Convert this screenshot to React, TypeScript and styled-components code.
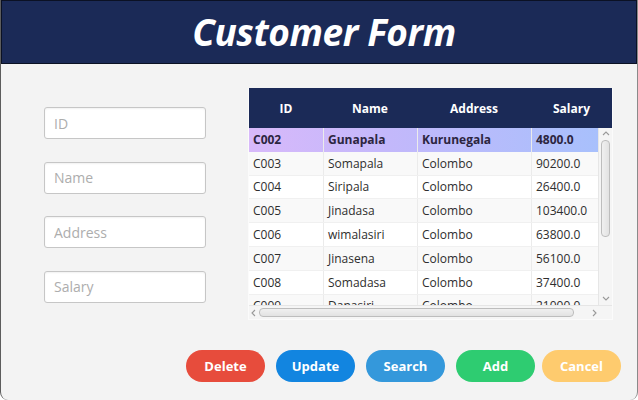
import React from "react";
import styled, { createGlobalStyle } from "styled-components";

const GlobalStyle = createGlobalStyle`
  body {
    margin: 0;
    background: #ffffff;
    font-family: "Open Sans", "Noto Sans", sans-serif;
  }
`;

// ウィンドウ全体
const Window = styled.div`
  width: 638px;
  height: 400px;
  box-sizing: border-box;
  border-left: 1px solid #5c5c5c;
  border-right: 1px solid #8a8a8a;
  border-bottom-left-radius: 8px;
  border-bottom-right-radius: 8px;
  background: #f3f3f3;
  display: flex;
  flex-direction: column;
  overflow: hidden;
`;

const Header = styled.header`
  height: 64px;
  box-sizing: border-box;
  border: 1px solid #0b1124;
  background: #1b2a57;
  display: flex;
  align-items: center;
  justify-content: center;
`;

const Title = styled.h1`
  margin: 0 0 2px 10px;
  color: #ffffff;
  font-family: "Open Sans", sans-serif;
  font-style: italic;
  font-weight: 700;
  font-size: 37px;
  letter-spacing: -0.4px;
`;

const Body = styled.main`
  flex: 1;
  display: flex;
  flex-direction: column;
  padding: 24px 0 0 43px;
`;

const Row = styled.div`
  display: flex;
  gap: 42px;
`;

const Fields = styled.div`
  width: 162px;
  margin-top: 19px;
  display: flex;
  flex-direction: column;
  gap: 22.5px;
`;

const Field = styled.input`
  height: 32px;
  box-sizing: border-box;
  border: 1px solid #c6c6c6;
  border-radius: 3px;
  background: #ffffff;
  box-shadow: inset 0 1px 2px rgba(0, 0, 0, 0.06);
  padding: 0 9px;
  font-family: "Open Sans", sans-serif;
  font-size: 14px;
  outline: none;
  &::placeholder {
    color: #adadad;
  }
`;

// テーブル
const Table = styled.div`
  width: 365px;
  height: 232px;
  box-sizing: border-box;
  border: 1px solid #fbfbfb;
  border-top: none;
  display: flex;
  flex-direction: column;
  background: #ffffff;
`;

const HeadRow = styled.div`
  height: 40px;
  flex-shrink: 0;
  background: #1b2a57;
  display: grid;
  grid-template-columns: 74px 94px 114px 1fr;
`;

const HeadCell = styled.div`
  display: flex;
  align-items: center;
  justify-content: center;
  color: #ffffff;
  font-weight: 700;
  font-size: 12px;
`;

const Middle = styled.div`
  flex: 1;
  display: flex;
  min-height: 0;
`;

const Rows = styled.div`
  flex: 1;
  overflow: hidden;
`;

const DataRow = styled.div<{ $odd: boolean; $selected?: boolean }>`
  height: 23.8px;
  display: grid;
  grid-template-columns: 74px 94px 114px 1fr;
  background: ${(p) =>
    p.$selected
      ? "linear-gradient(90deg, #d8b9fa 0%, #c3b8fb 40%, #a8c0fc 100%)"
      : p.$odd
      ? "#f9f9f9"
      : "#ffffff"};
  border-bottom: ${(p) => (p.$selected ? "none" : "1px solid #f0f0f0")};
  box-sizing: border-box;
  font-weight: ${(p) => (p.$selected ? 700 : 400)};
  color: ${(p) => (p.$selected ? "#2c2540" : "#2e2e2e")};
`;

const Cell = styled.div<{ $selected?: boolean }>`
  display: flex;
  align-items: center;
  padding-left: 4px;
  font-size: 12px;
  white-space: nowrap;
  overflow: hidden;
  & + & {
    border-left: 1px solid ${(p) => (p.$selected ? "#2a9fd0" : "#ebebeb")};
  }
`;

const VScroll = styled.div`
  width: 13px;
  flex-shrink: 0;
  background: #f5f5f5;
  border-left: 1px solid #e6e6e6;
  display: flex;
  flex-direction: column;
  align-items: center;
`;

const Arrow = styled.div<{ $w?: number }>`
  height: 12px;
  width: ${(p) => (p.$w ? `${p.$w}px` : "auto")};
  display: flex;
  align-items: center;
  justify-content: center;
`;

const VThumb = styled.div`
  width: 9px;
  height: 97px;
  box-sizing: border-box;
  border: 1px solid #bdbdbd;
  border-radius: 4px;
  background: linear-gradient(90deg, #f0f0f0, #e2e2e2);
`;

const Spacer = styled.div`
  flex: 1;
`;

const HScroll = styled.div`
  height: 13px;
  flex-shrink: 0;
  display: flex;
  align-items: center;
  background: #f5f5f5;
  border-top: 1px solid #e6e6e6;
`;

const HTrack = styled.div`
  width: 352px;
  display: flex;
  align-items: center;
`;

const HThumb = styled.div`
  width: 315px;
  height: 9px;
  box-sizing: border-box;
  border: 1px solid #bdbdbd;
  border-radius: 4px;
  background: linear-gradient(180deg, #f0f0f0, #e2e2e2);
`;

const Corner = styled.div`
  flex: 1;
  align-self: stretch;
  background: #f5f5f5;
`;

// ボタン
const Buttons = styled.div`
  display: flex;
  gap: 11px;
  margin: 30px 0 0 142px;
`;

const Button = styled.button<{ $color: string; $tight?: boolean }>`
  width: 79px;
  height: 32px;
  border: none;
  border-radius: 16px;
  margin-left: ${(p) => (p.$tight ? "-4px" : "0")};
  background: ${(p) => p.$color};
  color: #ffffff;
  font-family: "Open Sans", sans-serif;
  font-weight: 700;
  font-size: 13px;
  cursor: pointer;
`;

const Chevron: React.FC<{ dir: "up" | "down" | "left" | "right" }> = ({ dir }) => {
  const d = {
    up: "M1 5 L4 2 L7 5",
    down: "M1 2 L4 5 L7 2",
    left: "M5 1 L2 4 L5 7",
    right: "M2 1 L5 4 L2 7",
  }[dir];
  return (
    <svg width="8" height="8" viewBox="0 0 8 8">
      <path d={d} fill="none" stroke="#9a9a9a" strokeWidth="1.1" />
    </svg>
  );
};

const customers = [
  ["C002", "Gunapala", "Kurunegala", "4800.0"],
  ["C003", "Somapala", "Colombo", "90200.0"],
  ["C004", "Siripala", "Colombo", "26400.0"],
  ["C005", "Jinadasa", "Colombo", "103400.0"],
  ["C006", "wimalasiri", "Colombo", "63800.0"],
  ["C007", "Jinasena", "Colombo", "56100.0"],
  ["C008", "Somadasa", "Colombo", "37400.0"],
  ["C009", "Danasiri", "Colombo", "21000.0"],
];

const App: React.FC = () => {
  return (
    <Window>
      <GlobalStyle />
      <Header>
        <Title>Customer Form</Title>
      </Header>
      <Body>
        <Row>
          <Fields>
            <Field placeholder="ID" />
            <Field placeholder="Name" />
            <Field placeholder="Address" />
            <Field placeholder="Salary" />
          </Fields>

          <Table>
            <HeadRow>
              <HeadCell>ID</HeadCell>
              <HeadCell>Name</HeadCell>
              <HeadCell>Address</HeadCell>
              <HeadCell>Salary</HeadCell>
            </HeadRow>
            <Middle>
              <Rows>
                {customers.map((c, i) => (
                  <DataRow key={c[0]} $odd={i % 2 === 1} $selected={i === 0}>
                    {c.map((v) => (
                      <Cell key={v} $selected={i === 0}>
                        {v}
                      </Cell>
                    ))}
                  </DataRow>
                ))}
              </Rows>
              <VScroll>
                <Arrow>
                  <Chevron dir="up" />
                </Arrow>
                <VThumb />
                <Spacer />
                <Arrow>
                  <Chevron dir="down" />
                </Arrow>
              </VScroll>
            </Middle>
            <HScroll>
              <HTrack>
                <Arrow $w={10}>
                  <Chevron dir="left" />
                </Arrow>
                <HThumb />
                <Spacer />
                <Arrow $w={12}>
                  <Chevron dir="right" />
                </Arrow>
              </HTrack>
              <Corner />
            </HScroll>
          </Table>
        </Row>

        <Buttons>
          <Button $color="#e74c3c">Delete</Button>
          <Button $color="#1285e0">Update</Button>
          <Button $color="#3498db">Search</Button>
          <Button $color="#2ecc71">Add</Button>
          <Button $color="#fecb6e" $tight>
            Cancel
          </Button>
        </Buttons>
      </Body>
    </Window>
  );
};

export default App;
